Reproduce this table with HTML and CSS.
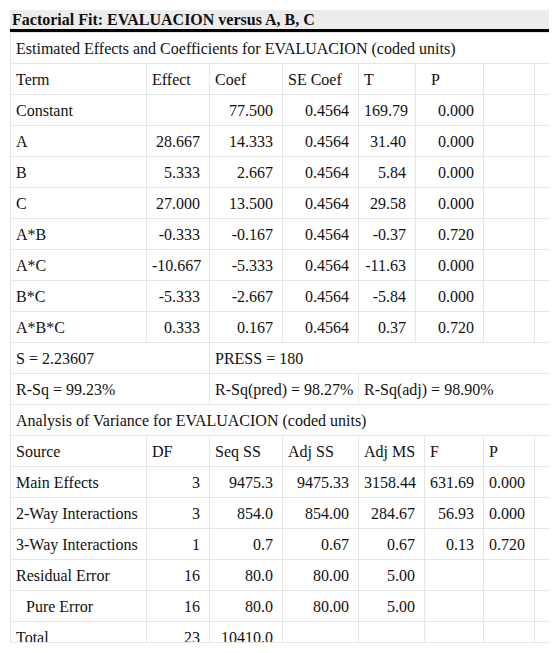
FILE: index.html
```html
<!DOCTYPE html>
<html>
<head>
<meta charset="utf-8">
<link rel="stylesheet" href="styles.css">
</head>
<body>
<div class="frame">
  <div class="title">Factorial Fit: EVALUACION versus A, B, C</div>
  <table class="grid">
    <colgroup>
      <col class="c1"><col class="c2"><col class="c3"><col class="c4"><col class="c5"><col class="c6"><col class="c7"><col class="c8"><col class="c9">
    </colgroup>
    <tbody>
      <tr><td colspan="9">Estimated Effects and Coefficients for EVALUACION (coded units)</td></tr>
      <tr><td>Term</td><td>Effect</td><td>Coef</td><td>SE Coef</td><td>T</td><td colspan="2" class="hp">P</td><td></td><td></td></tr>
      <tr><td>Constant</td><td></td><td class="n">77.500</td><td class="n">0.4564</td><td class="n">169.79</td><td colspan="2" class="n">0.000</td><td></td><td></td></tr>
      <tr><td>A</td><td class="n">28.667</td><td class="n">14.333</td><td class="n">0.4564</td><td class="n">31.40</td><td colspan="2" class="n">0.000</td><td></td><td></td></tr>
      <tr><td>B</td><td class="n">5.333</td><td class="n">2.667</td><td class="n">0.4564</td><td class="n">5.84</td><td colspan="2" class="n">0.000</td><td></td><td></td></tr>
      <tr><td>C</td><td class="n">27.000</td><td class="n">13.500</td><td class="n">0.4564</td><td class="n">29.58</td><td colspan="2" class="n">0.000</td><td></td><td></td></tr>
      <tr><td>A*B</td><td class="n">-0.333</td><td class="n">-0.167</td><td class="n">0.4564</td><td class="n">-0.37</td><td colspan="2" class="n">0.720</td><td></td><td></td></tr>
      <tr><td>A*C</td><td class="n">-10.667</td><td class="n">-5.333</td><td class="n">0.4564</td><td class="n">-11.63</td><td colspan="2" class="n">0.000</td><td></td><td></td></tr>
      <tr><td>B*C</td><td class="n">-5.333</td><td class="n">-2.667</td><td class="n">0.4564</td><td class="n">-5.84</td><td colspan="2" class="n">0.000</td><td></td><td></td></tr>
      <tr><td>A*B*C</td><td class="n">0.333</td><td class="n">0.167</td><td class="n">0.4564</td><td class="n">0.37</td><td colspan="2" class="n">0.720</td><td></td><td></td></tr>
      <tr><td colspan="2">S = 2.23607</td><td colspan="7">PRESS = 180</td></tr>
      <tr><td colspan="2">R-Sq = 99.23%</td><td colspan="2">R-Sq(pred) = 98.27%</td><td colspan="5">R-Sq(adj) = 98.90%</td></tr>
      <tr><td colspan="9">Analysis of Variance for EVALUACION (coded units)</td></tr>
      <tr><td>Source</td><td>DF</td><td>Seq SS</td><td>Adj SS</td><td colspan="2">Adj MS</td><td>F</td><td>P</td><td></td></tr>
      <tr><td>Main Effects</td><td class="n">3</td><td class="n">9475.3</td><td class="n">9475.33</td><td colspan="2" class="n">3158.44</td><td class="n">631.69</td><td>0.000</td><td></td></tr>
      <tr><td>2-Way Interactions</td><td class="n">3</td><td class="n">854.0</td><td class="n">854.00</td><td colspan="2" class="n">284.67</td><td class="n">56.93</td><td>0.000</td><td></td></tr>
      <tr><td>3-Way Interactions</td><td class="n">1</td><td class="n">0.7</td><td class="n">0.67</td><td colspan="2" class="n">0.67</td><td class="n">0.13</td><td>0.720</td><td></td></tr>
      <tr><td>Residual Error</td><td class="n">16</td><td class="n">80.0</td><td class="n">80.00</td><td colspan="2" class="n">5.00</td><td></td><td></td><td></td></tr>
      <tr><td class="ind">Pure Error</td><td class="n">16</td><td class="n">80.0</td><td class="n">80.00</td><td colspan="2" class="n">5.00</td><td></td><td></td><td></td></tr>
      <tr><td>Total</td><td class="n">23</td><td class="n">10410.0</td><td></td><td colspan="2"></td><td></td><td></td><td></td></tr>
    </tbody>
  </table>
</div>
</body>
</html>
```

FILE: styles.css
```css
html, body {
  margin: 0;
  padding: 0;
  background: #ffffff;
}
body {
  padding: 10px 0 0 10px;
  font-family: "Liberation Serif", "Times New Roman", serif;
  font-size: 16px;
  color: #111;
}
.frame {
  width: 540px;
  height: 633px;
  overflow: hidden;
  border-bottom: 1px solid #e6e6e6;
  box-sizing: border-box;
}
.title {
  background: #ececec;
  border-bottom: 3px solid #000;
  height: 19px;
  line-height: 19px;
  padding-left: 2px;
  font-weight: bold;
  font-size: 16px;
  width: 537px;
  white-space: nowrap;
}
.grid {
  border-collapse: collapse;
  table-layout: fixed;
  width: 540px;
}
.c1 { width: 136px; }
.c2 { width: 63px; }
.c3 { width: 73px; }
.c4 { width: 76px; }
.c5 { width: 57px; }
.c6 { width: 9px; }
.c7 { width: 59px; }
.c8 { width: 51px; }
.c9 { width: 16px; }
.grid td {
  border: 1px solid #e6e6e6;
  height: 29px;
  padding: 1px 6px 0 5px;
  white-space: nowrap;
  overflow: hidden;
  vertical-align: middle;
}
.grid td.n {
  text-align: right;
  padding-right: 9px;
}
.grid td.hp {
  padding-left: 15px;
}
.grid td.ind {
  padding-left: 15px;
}
```
